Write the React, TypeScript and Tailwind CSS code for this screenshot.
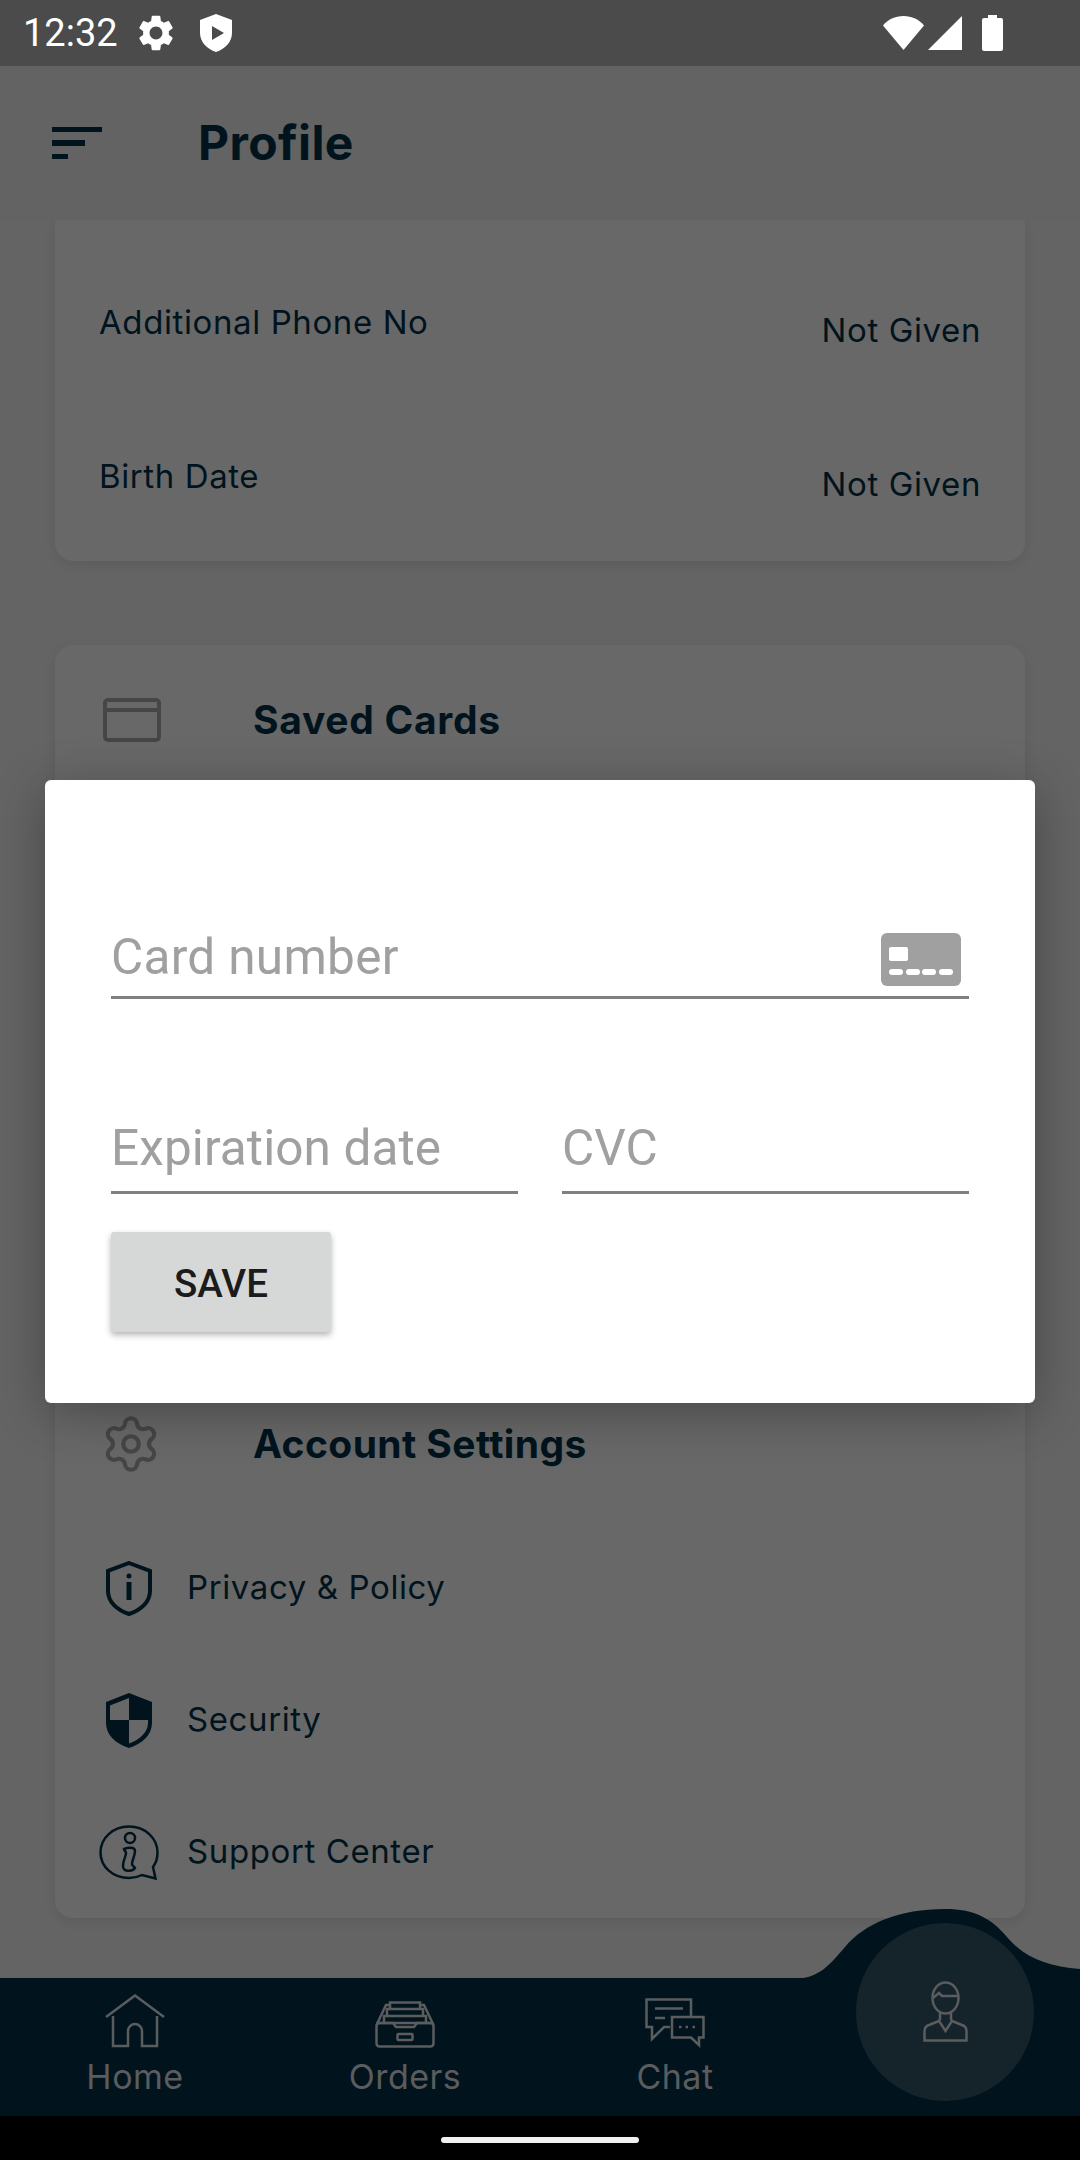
import { Settings } from "lucide-react";

const navy = "#01141e";
const muted = "#5a5c5e";

function StatusBar() {
  return (
    <div className="h-[66px] shrink-0 bg-[#4b4b4b] flex items-center pl-[23px] pr-[77px] text-white">
      <span className="font-['Roboto',sans-serif] text-[38px] leading-none">12:32</span>
      <svg className="ml-[21px] w-[34px] h-[36px]" viewBox="2.500 2 19 20" fill="white">
        <path d="M19.14 12.94c.04-.3.06-.61.06-.94 0-.32-.02-.64-.07-.94l2.030-1.580c.18-.14.23-.41.12-.61l-1.920-3.320c-.12-.22-.37-.29-.59-.22l-2.390.96c-.5-.38-1.030-.7-1.620-.94l-.36-2.540c-.04-.24-.24-.41-.48-.41h-3.840c-.24 0-.43.17-.47.41l-.36 2.540c-.59.24-1.130.57-1.620.94l-2.390-.96c-.22-.08-.47 0-.59.22L2.740 8.870c-.12.21-.08.47.12.61l2.030 1.580c-.05.3-.09.63-.09.94s.02.64.07.94l-2.030 1.580c-.18.14-.23.41-.12.61l1.920 3.320c.12.22.37.29.59.22l2.390-.96c.5.38 1.030.7 1.620.94l.36 2.540c.05.24.24.41.48.41h3.840c.24 0 .44-.17.47-.41l.36-2.540c.59-.24 1.130-.56 1.620-.94l2.390.96c.22.08.47 0 .59-.22l1.920-3.320c.12-.22.07-.47-.12-.61l-2.010-1.580zM12 15.600c-1.980 0-3.600-1.620-3.600-3.600s1.620-3.600 3.600-3.600 3.600 1.620 3.600 3.600-1.620 3.600-3.600 3.600z" />
      </svg>
      <svg className="ml-[27px] w-[32px] h-[38px]" viewBox="0 0 32 38" fill="white">
        <path fillRule="evenodd" d="M16 0 32 6v13c0 9-7 16-16 19C7 35 0 28 0 19V6zM12 12v14l12-7z" />
      </svg>
      <div className="ml-auto flex items-center gap-1">
        <svg className="w-[41px] h-[34px]" viewBox="0 0 41 34" fill="white">
          <path d="M0 9.500C5 3.500 12 0 20.500 0S36 3.500 41 9.500L20.500 34z" />
        </svg>
        <svg className="w-[34px] h-[34px]" viewBox="0 0 34 34" fill="white">
          <path d="M34 0v34H0z" />
        </svg>
        <svg className="ml-[16px] w-[21px] h-[36px]" viewBox="0 0 21 36" fill="white">
          <path d="M6 0h9v3h4a2 2 0 0 1 2 2v29a2 2 0 0 1-2 2H2a2 2 0 0 1-2-2V5a2 2 0 0 1 2-2h4z" />
        </svg>
      </div>
    </div>
  );
}

function AppBar() {
  return (
    <div className="h-[154px] shrink-0 bg-[#636363] flex items-center pl-[52px]">
      <div className="flex flex-col gap-2 w-[50px]">
        <div className="h-[5px] w-[50px] bg-[#01141e]" />
        <div className="h-[6px] w-[33px] bg-[#01141e]" />
        <div className="h-[5px] w-[16px] bg-[#01141e]" />
      </div>
      <h1 className="ml-[96px] font-['Inter',sans-serif] font-bold text-[48px] leading-none tracking-[0.4px] text-[#01141e]">
        Profile
      </h1>
    </div>
  );
}

function InfoRow({ label }: { label: string }) {
  return (
    <div className="h-[154px] flex justify-between pl-11 pr-11 text-[#01141e] font-['Inter',sans-serif] text-[33px] tracking-[0.6px] font-normal">
      <span className="pt-[11px] leading-[40px]">{label}</span>
      <span className="pt-[19px] leading-[40px]">Not Given</span>
    </div>
  );
}

function CardIcon() {
  return (
    <svg className="w-[58px] h-[44px]" viewBox="0 0 58 44" fill="none" stroke="#464646" strokeWidth="4">
      <rect x="2" y="2" width="54" height="40" rx="3" />
      <path d="M2 12h54" />
    </svg>
  );
}

function ShieldInfo() {
  return (
    <svg className="w-[46px] h-[55px]" viewBox="0 0 46 55" fill="none" stroke={navy} strokeWidth="4">
      <path d="M23 2 44 10v20c0 11-9 19-21 23C11 49 2 41 2 30V10z" />
      <path d="M23 21v18" strokeWidth="5" />
      <circle cx="23" cy="15" r="2.500" fill={navy} stroke="none" />
    </svg>
  );
}

function ShieldHalf() {
  return (
    <svg className="w-[46px] h-[55px]" viewBox="0 0 46 55" fill={navy}>
      <path fillRule="evenodd" d="M23 0 46 9v21c0 12-10 21-23 25C10 51 0 42 0 30V9zM23 5 4 12.500V27h19zM23 27v23.500c10-3.500 19-11 19-20.500v-3z" />
    </svg>
  );
}

function SupportIcon() {
  return (
    <svg className="w-[60px] h-[55px]" viewBox="0 0 60 55" fill="none" stroke={navy} strokeWidth="2.500">
      <path d="M43 50c-4 2-8 3-13 3C14 53 1.500 42 1.500 27.500S14 1.500 30 1.500s28.500 11.500 28.500 26c0 5.500-1.500 10.500-4.500 14.500l2.500 11.500z" />
      <circle cx="31" cy="13" r="5" />
      <path d="M25 24c5-2 11-2 11 2 0 5-3 9-3 13 0 2 3 3 3 4-3 4-12 4-12-2 0-6 3-9 3-13 0-2-2-2-2-4z" />
    </svg>
  );
}

function MenuRow({ icon, label }: { icon: React.ReactNode; label: string }) {
  return (
    <div className="h-[132px] flex items-center">
      <div className="w-[60px] flex justify-center">{icon}</div>
      <span className="ml-[28px] font-['Inter',sans-serif] text-[33px] tracking-[0.6px] font-normal text-[#01141e]">{label}</span>
    </div>
  );
}

function HomeIcon() {
  return (
    <svg className="w-[60px] h-[54px]" viewBox="0 0 60 54" fill="none" stroke={muted} strokeWidth="2.500">
      <path d="M1 23 30 1.500 59 23" />
      <path d="M8 22v30h15V37a7 7 0 0 1 14 0v15h15V22" />
    </svg>
  );
}

function OrdersIcon() {
  return (
    <svg className="w-[60px] h-[47px]" viewBox="0 0 60 47" fill="none" stroke={muted} strokeWidth="2.500">
      <rect x="1.500" y="22" width="57" height="23.500" rx="3" />
      <path d="M1.500 24 11 4h4M58.500 24 49 4h-4" />
      <path d="M1.500 22H18l3 4h18l3-4h16.500" />
      <path d="M15 8V1.500h30V8M12 15V8h36v7M9 22v-7h42v7" />
      <rect x="22.500" y="33" width="15" height="6" rx="1" />
    </svg>
  );
}

function ChatIcon() {
  return (
    <svg className="w-[60px] h-[50px]" viewBox="0 0 60 50" fill="none" stroke={muted} strokeWidth="2.500">
      <path d="M46 18V1.500H1.500V29H7v12l12-12h6" />
      <path d="M27 19h31.500v20.500H54V47l-8-7.500H27z" />
      <path d="M10 10.500h28M10 20h10" />
      <path d="M34 29h2.500M40.500 29H43M47.500 29H50" />
    </svg>
  );
}

function PersonIcon() {
  return (
    <svg className="w-[45px] h-[61px]" viewBox="0 0 45 61" fill="none" stroke={muted} strokeWidth="2.500">
      <ellipse cx="22.500" cy="17" rx="13" ry="15.500" />
      <path d="m10 17 6-5 3 3h17" />
      <path d="M16 40 6 44c-3 1-4.500 3-4.500 6v9.500h42V50c0-3-1.500-5-4.500-6l-10-4" />
      <path d="M17 32v6l-1 2 6.500 10L29 40l-1-2v-6" />
    </svg>
  );
}

function NavItem({ icon, label }: { icon: React.ReactNode; label: string }) {
  return (
    <div className="flex flex-col items-center">
      <div className="h-[58px] mt-[12px] flex items-end justify-center">{icon}</div>
      <span className="mt-[9px] font-['Inter',sans-serif] text-[34px] tracking-[0.5px] leading-[40px] text-[#5a5c5e]">{label}</span>
    </div>
  );
}

function BottomNav() {
  return (
    <div className="h-[138px] shrink-0 bg-[#01141e] grid grid-cols-4 relative">
      {/* bump behind the active tab */}
      <svg className="absolute left-[780px] top-[-69px] w-[300px] h-[70px]" viewBox="0 0 300 70" fill={navy}>
        <path d="M0 70h12c28 0 38-15 53-32C85 14 120 0 165 0c30 0 47 10 62 28 18 21 40 29 73 32v10z" />
      </svg>
      <NavItem icon={<HomeIcon />} label="Home" />
      <NavItem icon={<OrdersIcon />} label="Orders" />
      <NavItem icon={<ChatIcon />} label="Chat" />
      <div className="relative flex justify-center">
        <div className="absolute top-[-55px] w-[178px] h-[178px] rounded-full bg-[#15232b] flex items-center justify-center pb-[2px]">
          <PersonIcon />
        </div>
      </div>
    </div>
  );
}

function CardDialog() {
  return (
    <div className="absolute left-[45px] top-[780px] w-[990px] h-[623px] rounded-[6px] bg-white px-[66px] pt-[133px] shadow-[0_10px_50px_rgba(0,0,0,0.3)] font-['Roboto',sans-serif]">
      <div className="h-[86px] border-b-[3px] border-[#808080] flex items-end justify-between pb-[8px]">
        <span className="text-[49.500px] tracking-[0.3px] leading-[58px] text-[#a0a0a0] pb-[2px]">Card number</span>
        <svg className="w-[80px] h-[53px] mr-2 mb-[2px]" viewBox="0 0 80 53">
          <rect width="80" height="53" rx="6" fill="#a0a0a0" />
          <rect x="8" y="14" width="19" height="14" rx="2" fill="white" />
          <rect x="8" y="36" width="14" height="6" rx="3" fill="white" />
          <rect x="25" y="36" width="14" height="6" rx="3" fill="white" />
          <rect x="41" y="36" width="14" height="6" rx="3" fill="white" />
          <rect x="58" y="36" width="14" height="6" rx="3" fill="white" />
        </svg>
      </div>
      <div className="mt-[121px] grid grid-cols-2 gap-[44px]">
        <div className="h-[74px] border-b-[3px] border-[#808080] text-[49.500px] tracking-[0.1px] leading-[56px] text-[#a0a0a0]">Expiration date</div>
        <div className="h-[74px] border-b-[3px] border-[#808080] text-[49.500px] tracking-[0.1px] leading-[56px] text-[#a0a0a0]">CVC</div>
      </div>
      <button className="mt-[38px] w-[220px] h-[100px] pt-[3px] rounded-[3px] bg-[#d6d8d7] text-[38.500px] font-medium text-[#1b1b1b] shadow-[0_3px_6px_rgba(0,0,0,0.3)]">
        SAVE
      </button>
    </div>
  );
}

export default function App() {
  return (
    <div className="relative w-[1080px] h-[2160px] overflow-hidden flex flex-col bg-[#646464]">
      <StatusBar />
      <AppBar />
      <main className="flex-1 overflow-hidden px-[55px]">
        <section className="h-[341px] rounded-b-[18px] bg-[#686868] shadow-[0_4px_12px_rgba(0,0,0,0.08)] pt-[71px]">
          <InfoRow label="Additional Phone No" />
          <InfoRow label="Birth Date" />
        </section>
        <section className="mt-[84px] h-[389px] rounded-[18px] bg-[#686868] shadow-[0_4px_12px_rgba(0,0,0,0.08)] pl-12 pt-[53px] flex items-start">
          <CardIcon />
          <h2 className="ml-[92px] font-['Inter',sans-serif] font-bold text-[39px] tracking-[0.7px] leading-[44px] text-[#01141e]">Saved Cards</h2>
        </section>
        <section className="mt-[60px] h-[824px] rounded-[18px] bg-[#686868] shadow-[0_4px_12px_rgba(0,0,0,0.08)] pl-11 pt-[328px] relative">
          <div className="absolute left-[45px] top-[319px] flex items-center">
            <Settings className="w-[62px] h-[62px] text-[#464646]" strokeWidth={1.600} />
            <h2 className="ml-[91px] font-['Inter',sans-serif] font-bold text-[39px] tracking-[0.4px] leading-[44px] text-[#01141e]">Account Settings</h2>
          </div>
          <div className="pt-[100px]">
            <MenuRow icon={<ShieldInfo />} label="Privacy & Policy" />
            <MenuRow icon={<ShieldHalf />} label="Security" />
            <MenuRow icon={<SupportIcon />} label="Support Center" />
          </div>
        </section>
      </main>
      <BottomNav />
      <div className="h-11 shrink-0 bg-black flex justify-center pt-[21px]">
        <div className="w-[198px] h-[6px] rounded-full bg-[#f0f0f0]" />
      </div>
      <CardDialog />
    </div>
  );
}
